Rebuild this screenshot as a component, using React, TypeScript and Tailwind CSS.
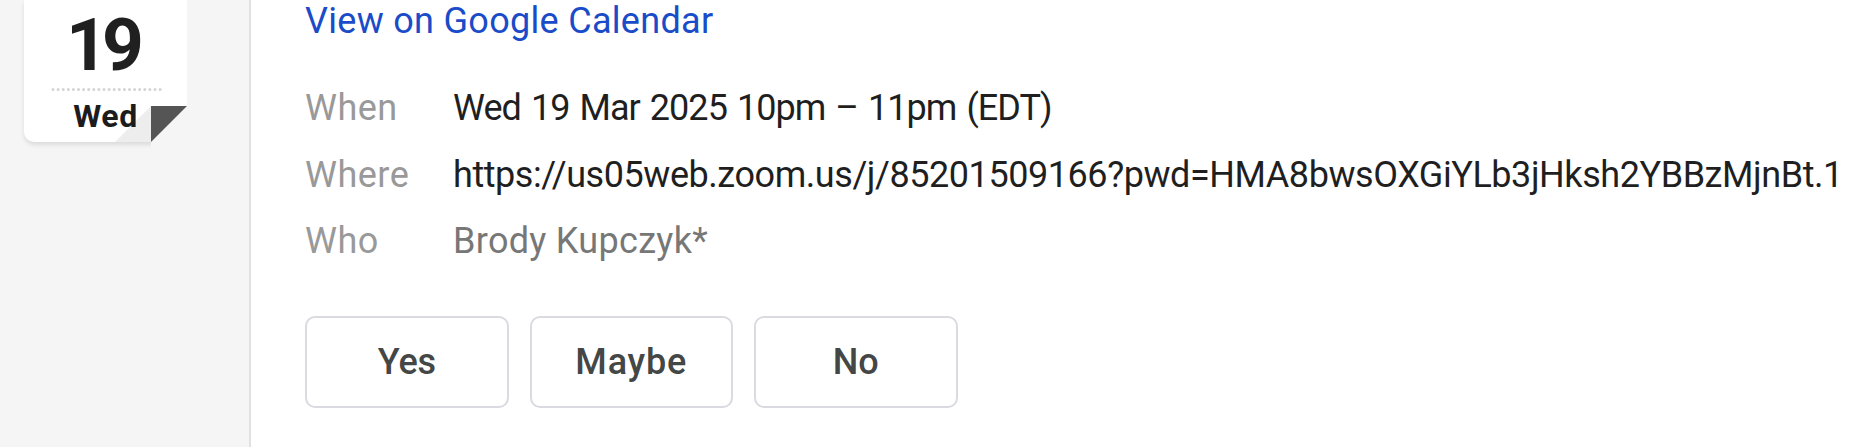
const details = [
    {
        label: 'When',
        value: 'Wed 19 Mar 2025 10pm – 11pm (EDT)',
        valueClass: 'text-[#1f1f1f] tracking-[-0.95px] [word-spacing:2px]'
    },
    {
        label: 'Where',
        value: 'https://us05web.zoom.us/j/85201509166?pwd=HMA8bwsOXGiYLb3jHksh2YBBzMjnBt.1',
        valueClass: 'text-[#1f1f1f] tracking-[-0.44px]'
    },
    {
        label: 'Who',
        value: 'Brody Kupczyk*',
        valueClass: 'text-[#777777] tracking-[0.3px]'
    }
]

const responses = [
    { label: 'Yes', className: 'tracking-[-0.3px]' },
    { label: 'Maybe', className: 'tracking-[0.8px]' },
    { label: 'No', className: '' }
]

function DateCard() {
    return (
        <div className="relative ml-6 h-[142px] w-[163px]">
            <div className="flex h-full flex-col items-center bg-white rounded-bl-[10px] shadow-[0_3px_4px_rgba(0,0,0,0.1)] [clip-path:polygon(-6px_0,100%_0,100%_106px,127px_142px,127px_150px,-6px_150px)]">
                <div className="h-[88px] pt-[9px] pr-[7px] text-[73px] font-bold leading-[73px] tracking-[-6px] text-[#202020]">19</div>
                <svg width="112" height="3" className="ml-0.5 shrink-0">
                    <line x1="2" y1="1.5" x2="112" y2="1.5" stroke="#d4d4d4" strokeWidth="3" strokeLinecap="round" strokeDasharray="0 5.1" />
                </svg>
                <div className="pt-[7px] text-[32px] font-bold leading-9 tracking-[0.5px] text-[#1c1c1c]">Wed</div>
            </div>
            <svg width="72" height="36" viewBox="0 0 72 36" className="absolute right-0 bottom-0">
                <path d="M0 36L36 0V36Z" fill="#000" fillOpacity="0.07" />
                <path d="M36 0H72L36 36Z" fill="#555555" />
            </svg>
        </div>
    )
}

export default function App() {
    return (
        <div className="flex h-[447px] w-[1871px] overflow-hidden bg-white font-['Roboto',sans-serif] text-[36px]">
            <aside className="w-[251px] shrink-0 border-r-2 border-[#e1e1e1] bg-[#f5f5f5]">
                <DateCard />
            </aside>

            <main className="flex-1 pl-[54px]">
                <div className="h-[75px] leading-[43px] whitespace-nowrap">
                    <a href="#" className="text-[#1a4bc8] tracking-[0.3px]">View on Google Calendar</a>
                </div>

                <dl>
                    {details.map(({ label, value, valueClass }) => (
                        <div key={label} className="flex h-[66.5px] leading-[67px] whitespace-nowrap">
                            <dt className="w-[148px] shrink-0 text-[#999999] tracking-[0.5px]">{label}</dt>
                            <dd className={valueClass}>{value}</dd>
                        </div>
                    ))}
                </dl>

                <div className="mt-[41px] flex gap-[21px]">
                    {responses.map(({ label, className }) => (
                        <button
                            key={label}
                            type="button"
                            className="h-[92px] w-[203.5px] rounded-[10px] border-2 border-[#dadae0] font-medium text-[#444746]"
                        >
                            <span className={className}>{label}</span>
                        </button>
                    ))}
                </div>
            </main>
        </div>
    )
}
